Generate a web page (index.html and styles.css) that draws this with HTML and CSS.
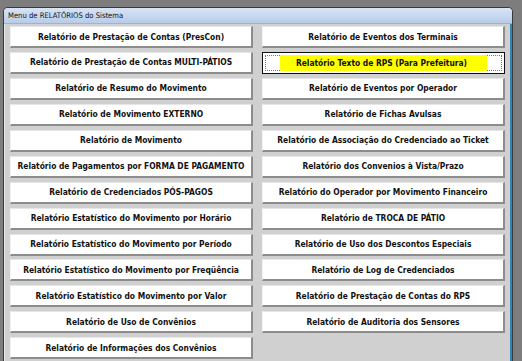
FILE: index.html
```html
<!DOCTYPE html>
<html>
    <head>
        <title>Menu de RELATÓRIOS do Sistema</title>
        <meta charset="utf-8">
        <link rel="stylesheet" href="styles.css">
    </head>
    <body>
        <div class="window">
            <div class="titlebar">Menu de RELATÓRIOS do Sistema</div>
            <div class="client">
                <div class="column">
                    <button type="button">Relatório de Prestação de Contas (PresCon)</button>
                    <button type="button">Relatório de Prestação de Contas MULTI-PÁTIOS</button>
                    <button type="button">Relatório de Resumo do Movimento</button>
                    <button type="button">Relatório de Movimento EXTERNO</button>
                    <button type="button">Relatório de Movimento</button>
                    <button type="button">Relatório de Pagamentos por FORMA DE PAGAMENTO</button>
                    <button type="button">Relatório de Credenciados PÓS-PAGOS</button>
                    <button type="button">Relatório Estatístico do Movimento por Horário</button>
                    <button type="button">Relatório Estatístico do Movimento por Período</button>
                    <button type="button">Relatório Estatístico do Movimento por Freqüência</button>
                    <button type="button">Relatório Estatístico do Movimento por Valor</button>
                    <button type="button">Relatório de Uso de Convênios</button>
                    <button type="button">Relatório de Informações dos Convênios</button>
                </div>
                <div class="column">
                    <button type="button">Relatório de Eventos dos Terminais</button>
                    <button type="button" class="focused"><span class="focus-ring"><span class="marker">Relatório Texto de RPS (Para Prefeitura)</span></span></button>
                    <button type="button">Relatório de Eventos por Operador</button>
                    <button type="button">Relatório de Fichas Avulsas</button>
                    <button type="button">Relatório de Associação do Credenciado ao Ticket</button>
                    <button type="button">Relatório dos Convenios à Vista/Prazo</button>
                    <button type="button">Relatório do Operador por Movimento Financeiro</button>
                    <button type="button">Relatório de TROCA DE PÁTIO</button>
                    <button type="button">Relatório de Uso dos Descontos Especiais</button>
                    <button type="button">Relatório de Log de Credenciados</button>
                    <button type="button">Relatório de Prestação de Contas do RPS</button>
                    <button type="button">Relatório de Auditoria dos Sensores</button>
                </div>
            </div>
        </div>
    </body>
</html>
```

FILE: styles.css
```css
body {
    margin: 0;
    background-color: #7d7d7d;
    font-family: "DejaVu Sans", sans-serif;
    color: #111;
}
.window {
    width: 508px;
    margin: 7px 0 0 3px;
    border: 1px solid #3a3a3a;
    border-bottom: none;
    border-radius: 5px 5px 0 0;
    background-color: #e4ecf6;
    overflow: hidden;
}
.titlebar {
    height: 15px;
    line-height: 15px;
    padding-left: 4px;
    font-family: "DejaVu Sans Condensed", "DejaVu Sans", sans-serif;
    font-size: 7.6px;
    color: #111;
    background: linear-gradient(#d8e4f4, #b8cce9);
    border-bottom: 1px solid #9fb3cf;
}
.client {
    display: flex;
    gap: 9px;
    padding: 2px 5px 6px 5px;
    background-color: #d0d0d0;
    border-right: 2px solid #2f86b4;
    border-left: 1px solid #e8e8e8;
}
.column {
    display: flex;
    flex-direction: column;
    gap: 3.95px;
    width: 244px;
}
button {
    height: 22px;
    padding: 0;
    margin: 0;
    font-family: "DejaVu Sans Condensed", "DejaVu Sans", sans-serif;
    font-weight: bold;
    font-size: 8.4px;
    color: #111;
    background-color: #fff;
    border-top: 1px solid #e6e6e6;
    border-left: 1px solid #f2f2f2;
    border-right: 2px solid #8c8c8c;
    border-bottom: 2px solid #8c8c8c;
    text-align: center;
}
.focused {
    border: 1px solid #111;
    padding: 2px;
    display: flex;
}
.focus-ring {
    flex: 1;
    display: flex;
    align-items: center;
    justify-content: center;
    border: 1px dotted #777;
}
.marker {
    background-color: #ffff00;
    padding: 3px 20px 3px 16px;
    border-radius: 2px;
}
```
